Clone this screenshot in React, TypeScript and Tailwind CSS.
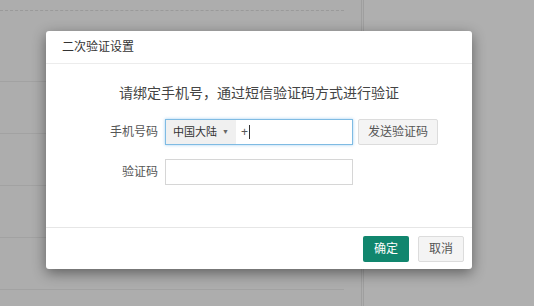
import React from 'react';

const App: React.FC = () => {
  return (
    <div className="relative w-[534px] h-[306px] overflow-hidden bg-[#adadad] font-['Liberation_Sans','Noto_Sans_CJK_SC',sans-serif]">
      {/* Page behind the overlay */}
      <div className="flex h-full">
        <div className="w-[364px] h-full border-r-[3px] border-double border-[#9f9f9f]">
          <div className="mr-[17px]">
            <div className="h-[11px] border-b border-dashed border-[#9a9a9a]" />
            <div className="h-[71px] border-b border-[#a2a2a2]" />
            <div className="h-[52px] border-b border-[#a2a2a2]" />
            <div className="h-[52px] border-b border-[#a2a2a2]" />
            <div className="h-[52px] border-b border-[#a2a2a2]" />
            <div className="h-[52px] border-b border-[#a2a2a2]" />
          </div>
        </div>
        <div className="flex-1 bg-[#afafaf]" />
      </div>

      {/* Dialog */}
      <div className="absolute left-[46px] top-[31px] w-[426px] h-[238px] bg-white rounded-[3px] shadow-[0_4px_14px_rgba(0,0,0,0.45)] flex flex-col">
        <div className="h-[33px] px-4 flex items-center border-b border-[#ececec] text-[12px] text-[#333]">
          二次验证设置
        </div>

        <div className="flex-1 flex flex-col">
          <p className="pt-[19px] text-center text-[14px] leading-[20px] text-[#444]">
            请绑定手机号，通过短信验证码方式进行验证
          </p>

          <div className="mt-[16px] flex items-center">
            <label className="w-[119px] shrink-0 pr-[7px] text-right text-[12px] text-[#555]">手机号码</label>
            <div className="w-[188px] h-[26px] flex items-stretch border border-[#7fbbe3] shadow-[0_0_3px_rgba(102,175,233,0.6)]">
              <div className="w-[70px] bg-[#f0f0f0] flex items-center pl-[7px] gap-[5px] text-[11px] text-[#333]">
                <span>中国大陆</span>
                <span className="text-[7px] text-[#666]">▼</span>
              </div>
              <div className="flex items-center pl-[5px] text-[12px] text-[#555]">
                <span>+</span>
                <span className="ml-[1px] w-px h-[14px] bg-[#333]" />
              </div>
            </div>
            <button className="ml-[5px] w-[80px] h-[26px] bg-[#f4f4f4] border border-[#dcdcdc] rounded-[2px] text-[12px] text-[#555]">
              发送验证码
            </button>
          </div>

          <div className="mt-[14px] flex items-center">
            <label className="w-[119px] shrink-0 pr-[7px] text-right text-[12px] text-[#555]">验证码</label>
            <div className="w-[188px] h-[26px] border border-[#d6d6d6]" />
          </div>
        </div>

        <div className="h-[42px] border-t border-[#e6e6e6] flex items-center justify-end pr-[8px] gap-[9px]">
          <button className="w-[46px] h-[26px] bg-[#11866e] rounded-[2px] text-[12px] text-white">确定</button>
          <button className="w-[46px] h-[26px] bg-[#f4f4f4] border border-[#dcdcdc] rounded-[2px] text-[12px] text-[#555]">取消</button>
        </div>
      </div>
    </div>
  );
};

export default App;
